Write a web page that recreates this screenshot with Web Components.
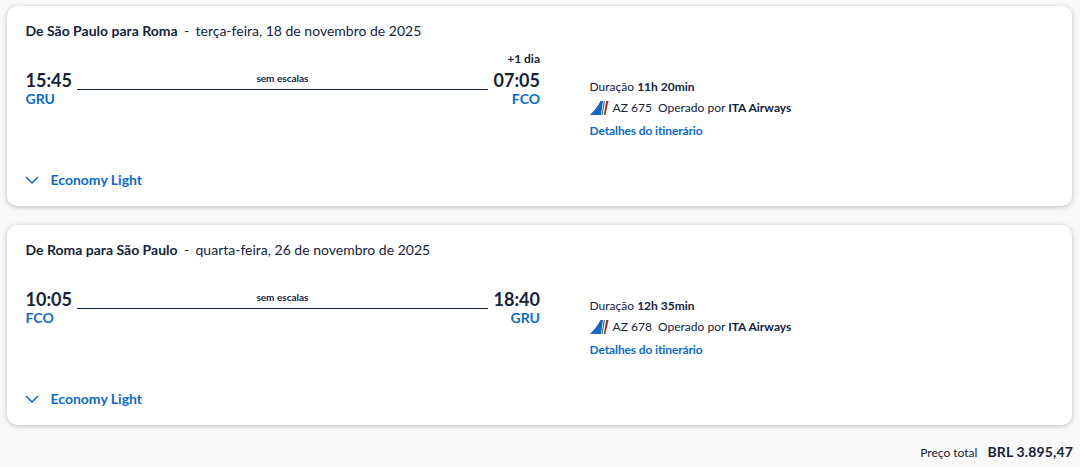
<!DOCTYPE html>
<html lang="pt"><head><meta charset="utf-8"><style>
html,body{margin:0;padding:0;background:#f9f9f9;height:467px;overflow:hidden}
body{font-family:Lato,sans-serif;color:#14233c}
app-root{display:block}
</style></head><body>
<app-root>
<flight-card route="De São Paulo para Roma" date="terça-feira, 18 de novembro de 2025" dep="15:45" arr="07:05" from="GRU" to="FCO" plus="+1 dia" dur="11h 20min" flight="AZ 675"></flight-card>
<flight-card route="De Roma para São Paulo" date="quarta-feira, 26 de novembro de 2025" dep="10:05" arr="18:40" from="FCO" to="GRU" plus="" dur="12h 35min" flight="AZ 678"></flight-card>
<price-total label="Preço total" value="BRL 3.895,47"></price-total>
</app-root>
<script>
class FlightCard extends HTMLElement{
 connectedCallback(){
  const a=n=>this.getAttribute(n)||'';
  this.attachShadow({mode:'open'}).innerHTML=`<style>
:host{display:block;box-sizing:border-box;width:1065px;height:200px;margin:6px 0 19px 7px;background:#fff;border-radius:10px;box-shadow:0 1px 5px rgba(0,0,0,.25);padding:16px 18.5px 0;color:#14233c}
.head{font-size:14px;line-height:18px;height:18px;white-space:pre}
.head b{font-weight:700}
.sep{margin:0 6.4px}
.main{display:flex;margin-top:10px}
.times{width:514.5px;flex:none}
.plus{height:20px;line-height:18px;font-size:12px;font-weight:700;text-align:right}
.row{display:flex;align-items:flex-start}
.t{font-size:18px;font-weight:700;line-height:20px}
.mid{flex:1;margin:0 5.6px 0 5px;height:19px;border-bottom:1px solid #14233c;text-align:center;font-size:10px;line-height:16px;font-weight:700;box-sizing:content-box}
.codes{display:flex;justify-content:space-between;font-size:14px;font-weight:700;color:#0b6bcb;line-height:18px}
.info{margin:26px 0 0 49.6px;font-size:12px;line-height:22px}
.info b{font-weight:700}
.flight{display:flex;align-items:center;height:18px;margin-top:1px;white-space:pre}
.flight svg{width:19px;height:14px;margin-right:4px;flex:none}
.link{color:#0b6bcb;font-weight:700;display:block;margin-top:3px;letter-spacing:-.12px}
.fare-row{display:flex;align-items:center;margin-top:29px;color:#0b6bcb;font-size:14px;font-weight:700;line-height:18px}
.fare-row svg{width:14px;height:8px;margin-right:12px;flex:none;margin-left:-1px}
</style>
<div class="head"><b>${a('route')}</b><span class="sep">-</span>${a('date')}</div>
<div class="main">
 <div class="times">
  <div class="plus">${a('plus')}</div>
  <div class="row"><span class="t">${a('dep')}</span><span class="mid">sem escalas</span><span class="t">${a('arr')}</span></div>
  <div class="codes"><span>${a('from')}</span><span>${a('to')}</span></div>
 </div>
 <div class="info">
  <div>Duração <b>${a('dur')}</b></div>
  <div class="flight"><svg viewBox="0 0 19 14"><path d="M0 14 C4 10 8 5 10.5 0 H13 L11 14Z" fill="#1467c4"/><path d="M13.7 0 H15 L12.6 14 H11.6Z" fill="#2f8a4a"/><path d="M16.2 0 H18.5 L15.4 14 H13.8Z" fill="#b5252b"/></svg><span>${a('flight')}  Operado por <b>ITA Airways</b></span></div>
  <span class="link">Detalhes do itinerário</span>
 </div>
</div>
<div class="fare-row"><svg viewBox="0 0 14 8"><path d="M1 1l6 6 6-6" fill="none" stroke="#0b6bcb" stroke-width="1.5"/></svg>Economy Light</div>`;
 }
}
customElements.define('flight-card',FlightCard);
class PriceTotal extends HTMLElement{
 connectedCallback(){
  this.attachShadow({mode:'open'}).innerHTML=`<style>
:host{display:flex;justify-content:flex-end;align-items:baseline;gap:10px;width:1073px;margin-top:-2px;color:#14233c;line-height:20px}
.l{font-size:12px}.v{font-size:14px;font-weight:700;letter-spacing:.15px}
</style><span class="l">${this.getAttribute('label')}</span><span class="v">${this.getAttribute('value')}</span>`;
 }
}
customElements.define('price-total',PriceTotal);
</script></body></html>
